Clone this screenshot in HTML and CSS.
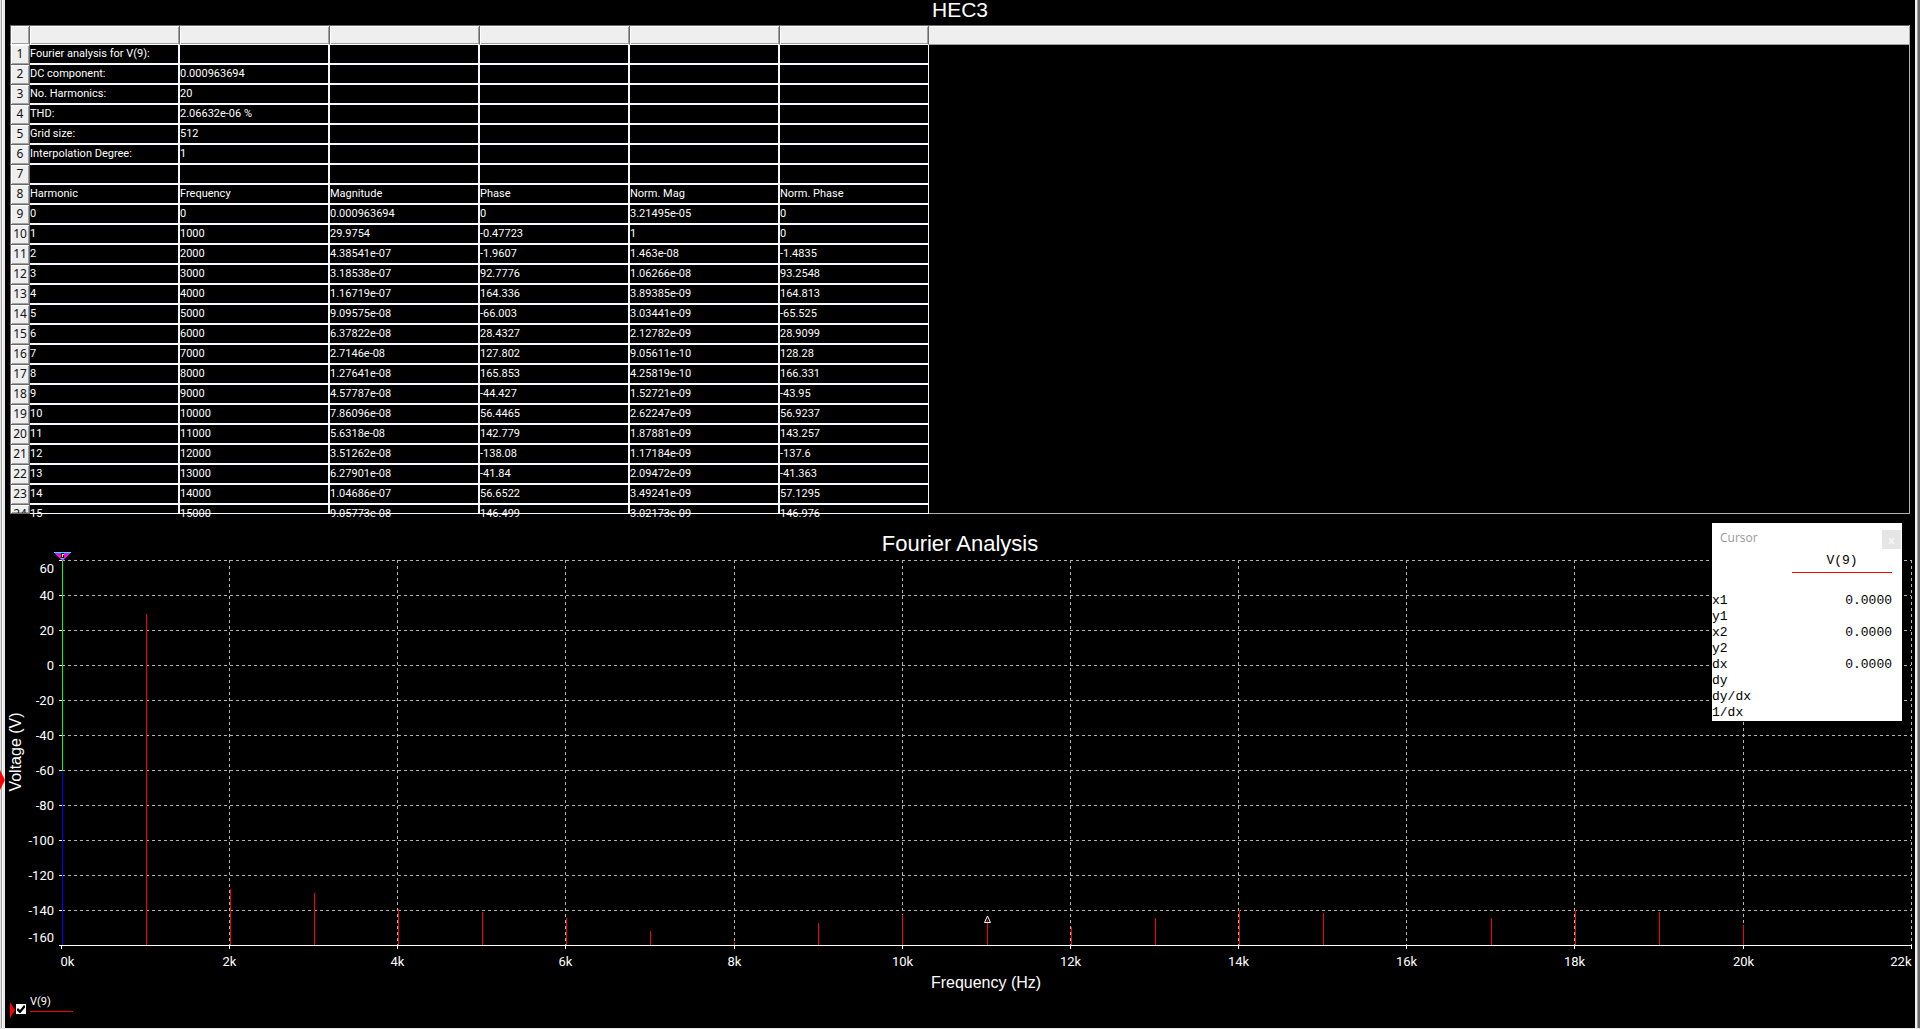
FILE: index.html
```html
<!DOCTYPE html>
<html lang="en">
  <head>
    <meta charset="UTF-8" />
    <title>HEC3 - Fourier Analysis</title>
    <link rel="stylesheet" href="styles.css">
  </head>
  <body>
    <div class="window">
      <div class="edge edge-left">
        <div class="marker active-plot"></div>
      </div>

      <main class="panel">
        <h1 class="title">HEC3</h1>

        <!-- Fourier result sheet, rows are filled in by script.js -->
        <table class="sheet">
          <colgroup>
            <col class="col-num" />
            <col class="col-data" span="5" />
            <col class="col-last" />
            <col />
          </colgroup>
          <thead>
            <tr>
              <th></th>
              <th></th>
              <th></th>
              <th></th>
              <th></th>
              <th></th>
              <th></th>
              <th class="rest"></th>
            </tr>
          </thead>
          <tbody id="sheetBody"></tbody>
        </table>

        <h2 class="title chart-title">Fourier Analysis</h2>
        <svg class="chart" id="chart"></svg>

        <!-- Legend -->
        <div class="legend">
          <div class="marker"></div>
          <input type="checkbox" id="trace" checked />
          <label for="trace">V(9)</label>
        </div>
      </main>

      <div class="edge edge-right"></div>
    </div>

    <!-- Floating cursor window -->
    <div class="cursor">
      <div class="cursor-bar">
        <span>Cursor</span>
        <button type="button" id="closeCursor">x</button>
      </div>
      <table class="readout">
        <thead>
          <tr><td></td><th>V(9)</th></tr>
        </thead>
        <tbody>
          <tr><th>x1</th><td>0.0000</td></tr>
          <tr><th>y1</th><td></td></tr>
          <tr><th>x2</th><td>0.0000</td></tr>
          <tr><th>y2</th><td></td></tr>
          <tr><th>dx</th><td>0.0000</td></tr>
          <tr><th>dy</th><td></td></tr>
          <tr><th>dy/dx</th><td></td></tr>
          <tr><th>1/dx</th><td></td></tr>
        </tbody>
      </table>
    </div>

    <script src="script.js"></script>
  </body>
</html>
```

FILE: styles.css
```css
* {
  box-sizing: border-box;
}

body {
  margin: 0;
  background: #000;
  color: #fff;
  font-family: Roboto, sans-serif;
  font-size: 11px;
}

/* Window frame */
.window {
  display: flex;
  min-height: 100vh;
  border-bottom: 1px solid #e8e8e8;
}

.edge {
  flex: 0 0 5px;
  position: relative;
}

.edge-left {
  background: linear-gradient(to right, #e3e3e3 1px, #a0a0a0 1px 2px, #fff 2px 3px, #e3e3e3 3px 4px, #f0f0f0 4px);
}

.edge-right {
  background: linear-gradient(to right, #f0f0f0 2px, #a0a0a0 2px 3px, #696969 3px);
}

.panel {
  flex: 1;
  min-width: 0;
  display: flex;
  flex-direction: column;
}

.title {
  margin: 0;
  height: 25px;
  font: 21px/20px "Liberation Sans", Arial, sans-serif;
  text-align: center;
}

.chart-title {
  height: 38px;
  font-size: 22px;
  line-height: 60px;
}

/* Result sheet */
.sheet {
  margin: 0 5px;
  table-layout: fixed;
  border-collapse: separate;
  border-spacing: 0;
  border: 1px solid #b0b0b0;
  border-width: 0 1px 0 0;
}

.col-num {
  width: 20px;
}

.col-data {
  width: 150px;
}

.col-last {
  width: 149px;
}

.sheet th,
.sheet td {
  padding: 0;
  height: 20px;
  font-weight: normal;
  line-height: 18px;
  vertical-align: top;
}

.sheet td {
  border: 2px solid #f8f8ff;
  border-width: 0 2px 2px 0;
  text-align: left;
  white-space: nowrap;
}

.sheet td:nth-child(7) {
  border-right-width: 1px;
}

/* raised header cells */
.sheet th {
  background: #efefef;
  color: #111;
  font-family: "Noto Sans", sans-serif;
  font-size: 12px;
  line-height: 17px;
  text-align: center;
  border: 1px solid #696969;
  border-width: 0 1px 1px 0;
  box-shadow: inset 1px 1px #fff, inset -1px -1px #a0a0a0;
}

.sheet th:first-child {
  border-left-width: 1px;
}

.sheet thead th {
  border-width: 1px 1px 1px 0;
  border-bottom-color: #fff;
}

.sheet thead th.rest {
  border-bottom-color: #a0a0a0;
  border-right-width: 0;
  box-shadow: inset 0 1px #fff;
}

.sheet .blank {
  border: 0;
  border-bottom: 1px solid #b0b0b0;
}

/* last visible row is cut off by the sheet */
.sheet .cut th,
.sheet .cut td {
  height: 9px;
  border-bottom-width: 1px;
}

.cut div {
  height: 8px;
}

.cut th div {
  overflow: hidden;
}

/* Chart */
.chart {
  display: block;
  width: 100%;
  height: 443px;
  font: 13px Roboto, sans-serif;
  fill: #fff;
}

.chart line,
.chart polygon {
  shape-rendering: crispEdges;
}

.chart .grid {
  stroke: #b4b4b4;
  stroke-dasharray: 3 3;
}

.chart .axis {
  stroke: #fff;
}

.chart .harmonic {
  stroke: #f00;
}

.chart .range-high {
  stroke: #0f0;
}

.chart .range-low {
  stroke: #00f;
}

.chart .name {
  font: 16px "Liberation Sans", Arial, sans-serif;
}

.chart .peak {
  fill: none;
  stroke: #fff;
}

/* Legend */
.marker {
  width: 5px;
  height: 16px;
  background: #f00;
  clip-path: polygon(0 0, 100% 50%, 0 100%);
}

.active-plot {
  position: absolute;
  top: 770px;
  left: 0;
  height: 20px;
}

.legend {
  display: flex;
  align-items: flex-start;
  padding: 0 5px;
}

.legend .marker {
  margin-top: 7px;
}

.legend input {
  appearance: none;
  width: 10px;
  height: 10px;
  margin: 9px 4px 0 1px;
  background: #fff;
}

.legend input:checked::before {
  content: "";
  display: block;
  width: 10px;
  height: 10px;
  background: #000;
  clip-path: polygon(10% 50%, 20% 40%, 40% 60%, 80% 10%, 90% 20%, 90% 35%, 45% 90%, 35% 90%, 10% 65%);
}

.legend label {
  width: 43px;
  height: 17px;
  border-bottom: 1px solid #f00;
  font-size: 11px;
  line-height: 14px;
}

/* Cursor window */
.cursor {
  position: absolute;
  top: 523px;
  right: 18px;
  width: 190px;
  background: #fff;
  color: #000;
}

.cursor-bar {
  display: flex;
  justify-content: space-between;
  align-items: flex-end;
  height: 26px;
  padding: 0 1px 0 8px;
  color: #999;
  font: 12px/22px "Open Sans", sans-serif;
}

.cursor-bar button {
  width: 19px;
  height: 19px;
  padding: 0;
  border: 0;
  background: #e5e5e5;
  color: #f6f6f6;
  font: bold 11px/16px "Open Sans", sans-serif;
}

.readout {
  width: 180px;
  border-spacing: 0;
  font: 13px/16px "Liberation Mono", "Courier New", monospace;
}

.readout th,
.readout td {
  padding: 0;
  height: 16px;
  font-weight: normal;
  text-align: left;
}

.readout tbody td {
  text-align: right;
}

.readout thead th {
  width: 100px;
  height: 24px;
  border-bottom: 1px solid #f00;
  text-align: center;
}

/* gap under the trace name */
.readout tbody::before {
  content: "";
  display: block;
  height: 20px;
}
```

FILE: script.js
```js
const rows = [
  ["Fourier analysis for V(9):"],
  ["DC component:", "0.000963694"],
  ["No. Harmonics:", "20"],
  ["THD:", "2.06632e-06 %"],
  ["Grid size:", "512"],
  ["Interpolation Degree:", "1"],
  [],
  ["Harmonic", "Frequency", "Magnitude", "Phase", "Norm. Mag", "Norm. Phase"],
  ["0", "0", "0.000963694", "0", "3.21495e-05", "0"],
  ["1", "1000", "29.9754", "-0.47723", "1", "0"],
  ["2", "2000", "4.38541e-07", "-1.9607", "1.463e-08", "-1.4835"],
  ["3", "3000", "3.18538e-07", "92.7776", "1.06266e-08", "93.2548"],
  ["4", "4000", "1.16719e-07", "164.336", "3.89385e-09", "164.813"],
  ["5", "5000", "9.09575e-08", "-66.003", "3.03441e-09", "-65.525"],
  ["6", "6000", "6.37822e-08", "28.4327", "2.12782e-09", "28.9099"],
  ["7", "7000", "2.7146e-08", "127.802", "9.05611e-10", "128.28"],
  ["8", "8000", "1.27641e-08", "165.853", "4.25819e-10", "166.331"],
  ["9", "9000", "4.57787e-08", "-44.427", "1.52721e-09", "-43.95"],
  ["10", "10000", "7.86096e-08", "56.4465", "2.62247e-09", "56.9237"],
  ["11", "11000", "5.6318e-08", "142.779", "1.87881e-09", "143.257"],
  ["12", "12000", "3.51262e-08", "-138.08", "1.17184e-09", "-137.6"],
  ["13", "13000", "6.27901e-08", "-41.84", "2.09472e-09", "-41.363"],
  ["14", "14000", "1.04686e-07", "56.6522", "3.49241e-09", "57.1295"],
  ["15", "15000", "9.05773e-08", "146.499", "3.02173e-09", "146.976"],
];

// level of each harmonic in dB, [kHz, dB]
const levels = [
  [1, 29.5], [2, -127.2], [3, -129.9], [4, -138.7], [5, -140.8],
  [6, -143.9], [7, -151.3], [8, -157.9], [9, -146.8], [10, -142.1],
  [11, -145], [12, -149.1], [13, -144], [14, -139.6], [15, -140.9],
  [17, -144], [18, -139.5], [19, -140.3], [20, -148],
];

// Fill the sheet
const body = document.getElementById("sheetBody");
rows.forEach((row, i) => {
  const tr = body.insertRow();
  const last = i === rows.length - 1;
  if (last) tr.className = "cut";
  const cells = [`<th><div>${i + 1}</div></th>`];
  for (let c = 0; c < 6; c++) {
    cells.push(`<td><div>${row[c] || ""}</div></td>`);
  }
  if (i === 0) cells.push(`<td class="blank" rowspan="${rows.length}"></td>`);
  tr.innerHTML = cells.join("");
});

// Draw the spectrum
const chart = document.getElementById("chart");

function line(cls, x1, y1, x2, y2) {
  return `<line class="${cls}" x1="${x1}" y1="${y1}" x2="${x2}" y2="${y2}"/>`;
}

function label(text, x, y, anchor) {
  return `<text x="${x}" y="${y}" text-anchor="${anchor}">${text}</text>`;
}

function drawChart() {
  const left = 56;
  const right = chart.clientWidth - 4;
  const top = 8;
  const bottom = 393;
  const xAt = (k) => Math.floor(left + ((right - left) * k) / 22 + 0.3) + 0.5;
  const barAt = (k) => Math.round(left + 1 + ((right - left - 1) * k) / 22) + 0.5;
  const yAt = (db) => Math.round(top + ((60 - db) * (bottom - top)) / 220) + 0.5;
  let out = "";

  for (let db = 60; db >= -160; db -= 20) {
    const y = yAt(db);
    if (db > -160) {
      out += line("grid", left + 1, y, right, y);
      out += line("axis", left - 2, y, left + 1, y);
    }
    let ty = Math.floor(y) + 5;
    if (db === 60) ty += 8;
    if (db === -160) ty -= 8;
    out += label(db, left - 7, ty, "end");
  }

  for (let k = 0; k <= 22; k += 2) {
    const x = xAt(k);
    if (k > 0) out += line("grid", x, top, x, bottom);
    out += line("axis", x, bottom, x, bottom + 4);
    if (k === 0) out += label("0k", x - 1, bottom + 21, "start");
    else if (k === 22) out += label("22k", x, bottom + 21, "end");
    else out += label(k + "k", x, bottom + 21, "middle");
  }

  levels.forEach(([k, db]) => {
    const x = barAt(k);
    out += line("harmonic", x, yAt(db), x, bottom);
  });

  // cursor range on the left axis
  const cx = left + 1.5;
  out += line("range-high", cx, top, cx, yAt(-60));
  out += line("range-low", cx, yAt(-60), cx, bottom);
  out += line("axis", left - 2, bottom + 0.5, right + 1, bottom + 0.5);

  // cursor handle
  out += `<polygon fill="#f0f" points="${cx - 8},1 ${cx + 8},1 ${cx},9"/>`;
  out += `<polygon fill="#0ff" points="${cx - 8.5},0 ${cx + 8.5},0 ${cx + 8.5},1 ${cx - 8.5},1"/>`;
  out += `<polygon fill="#000" points="${cx - 1.5},1 ${cx + 1.5},1 ${cx + 1.5},6 ${cx - 1.5},6"/>`;
  out += `<polygon fill="#ff0" points="${cx - 0.5},2 ${cx + 1.5},2 ${cx + 1.5},3 ${cx + 0.5},3 ${cx + 0.5},5 ${cx - 0.5},5"/>`;
  out += `<polygon fill="#0ff" points="${cx - 1.5},6 ${cx + 1.5},6 ${cx + 1.5},7 ${cx - 1.5},7"/>`;

  // peak marker
  const px = barAt(11);
  out += `<path class="peak" d="M${px} 364 L${px + 3} 370.5 H${px - 3} Z"/>`;

  const mid = (left + right) / 2;
  out += `<text class="name" x="${mid}" y="436" text-anchor="middle">Frequency (Hz)</text>`;
  out += `<text class="name" text-anchor="middle" transform="translate(16 200) rotate(-90)">Voltage (V)</text>`;

  chart.innerHTML = out;
}

drawChart();
window.addEventListener("resize", drawChart);

document.getElementById("closeCursor").addEventListener("click", () => {
  document.querySelector(".cursor").style.display = "none";
});
```
